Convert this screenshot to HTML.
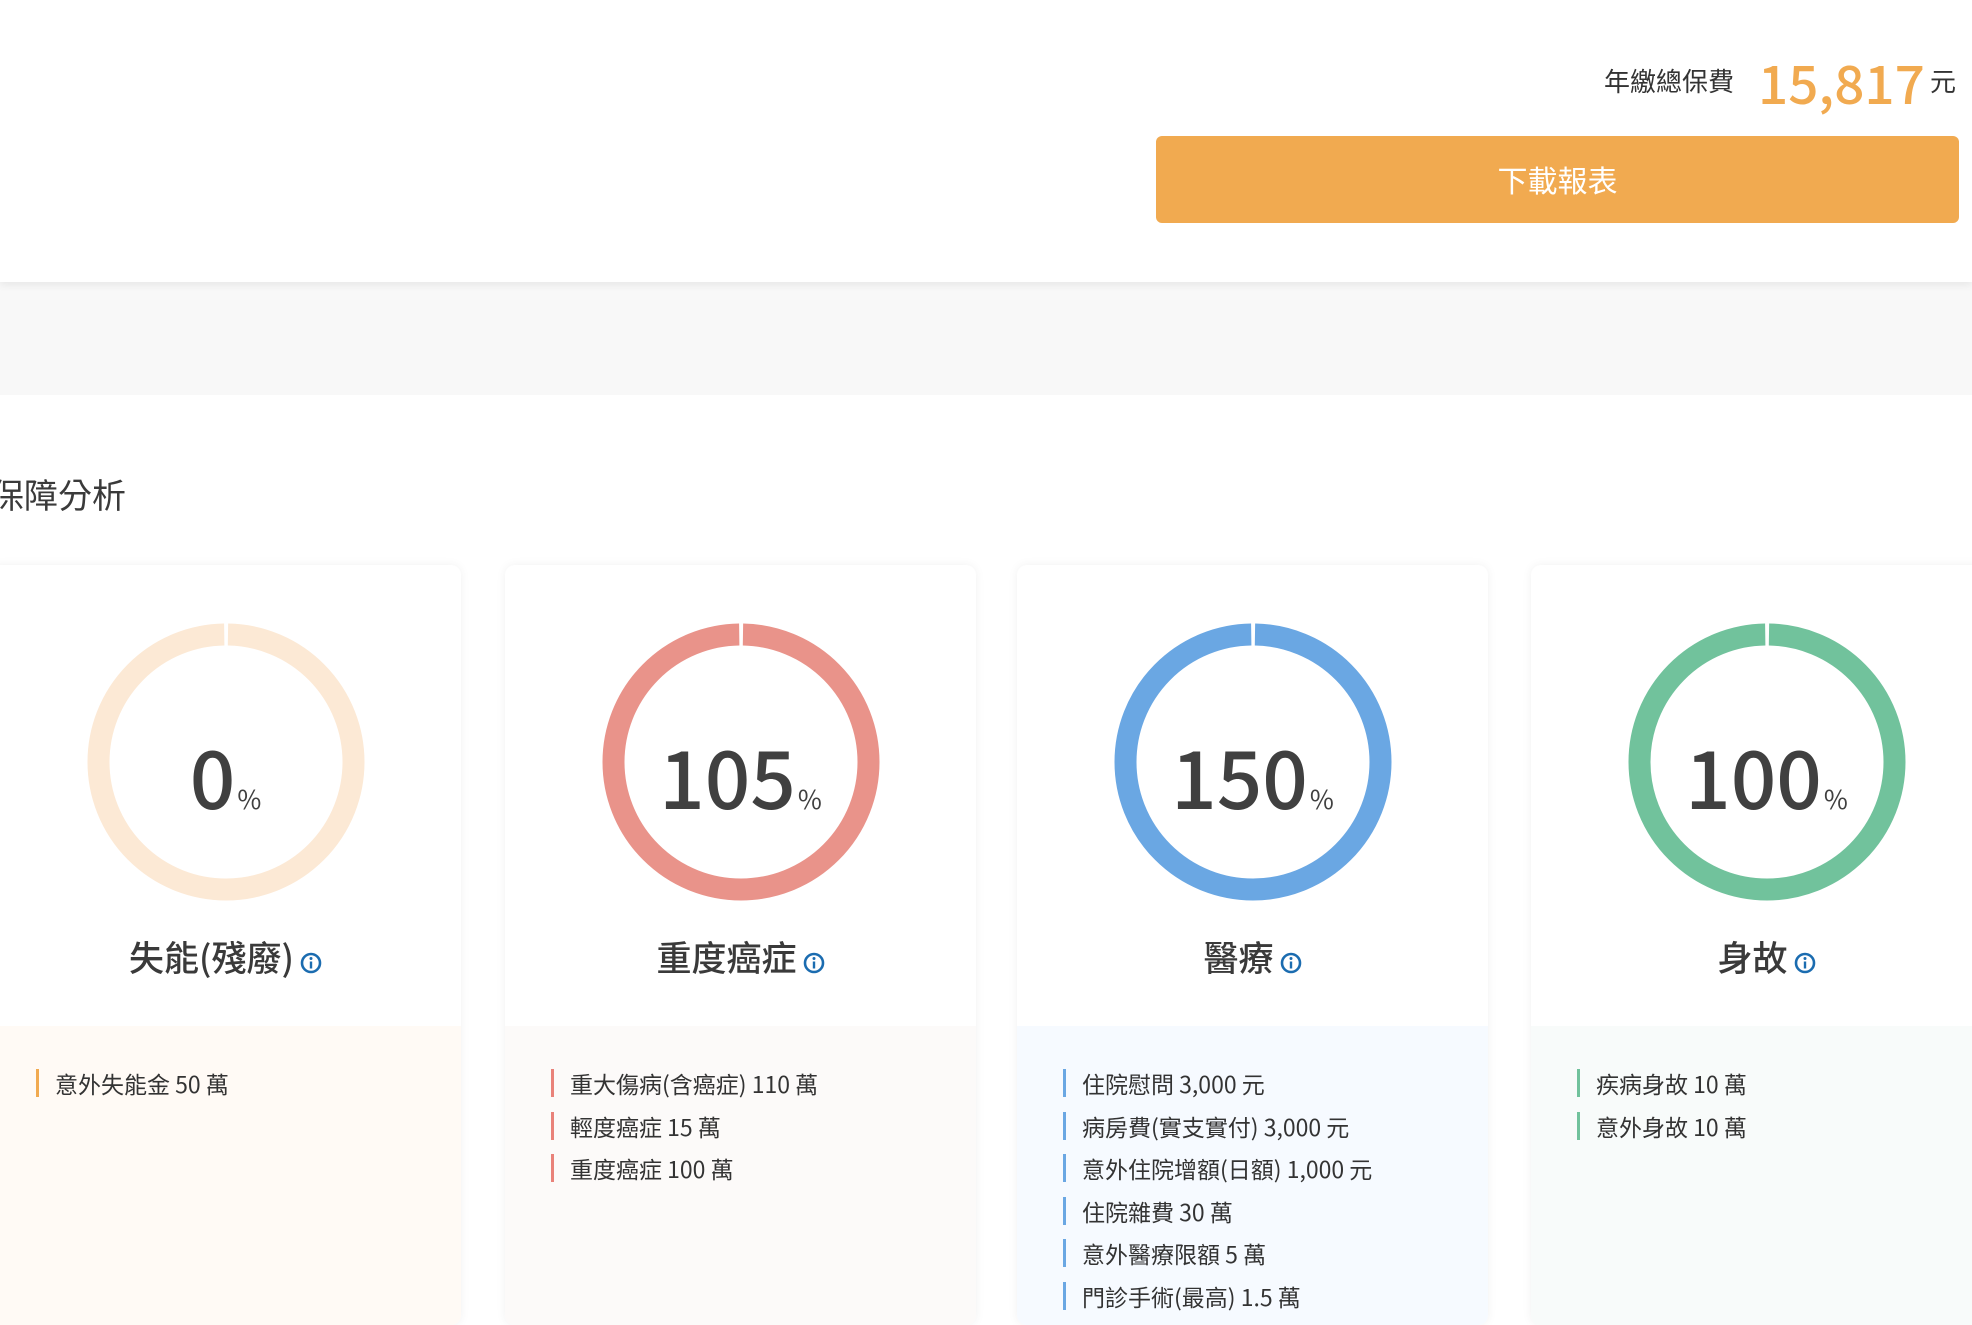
<!DOCTYPE html>
<html><head><meta charset="utf-8">
<style>
*{margin:0;padding:0;box-sizing:border-box}
body{width:1972px;height:1311px;overflow:hidden;background:#fff;font-family:"Liberation Sans","Noto Sans CJK TC",sans-serif;color:#333;position:relative}
.hdr{position:absolute;left:0;top:0;width:1972px;height:282px;background:#fff;box-shadow:0 3px 8px rgba(0,0,0,.07);z-index:2}
.band{position:absolute;left:0;top:282px;width:1972px;height:113px;background:#f8f8f8}
.ab{position:absolute;white-space:nowrap}
.cjk{font-family:"Noto Sans CJK TC",sans-serif}
.btn{position:absolute;left:1156px;top:136px;width:803px;height:87px;background:#f1aa50;border-radius:6px;color:#fff;font-size:30px;text-align:center;line-height:87px;font-family:"Noto Sans CJK TC",sans-serif}
.card{position:absolute;top:565px;width:471px;height:760px;background:#fff;border-radius:10px;box-shadow:0 0 10px rgba(0,0,0,.06);overflow:hidden}
.card .bot{position:absolute;left:0;top:461px;width:100%;height:300px}
.card svg.ring{position:absolute;left:96px;top:57px}
.num{position:absolute;left:0;width:100%;text-align:center;top:170px;font-family:"Noto Sans CJK TC",sans-serif;font-size:80px;font-weight:500;color:#404040;line-height:1}
.num span{font-size:26px;font-weight:400;margin-left:2px}
.ttl{position:absolute;left:0;width:100%;text-align:center;top:368px;font-family:"Noto Sans CJK TC",sans-serif;font-size:35px;font-weight:500;color:#3a3a3a;line-height:48px}
.ttl svg{vertical-align:-3px;margin-left:6px}
ul{position:absolute;left:46px;top:497px;list-style:none}
li{position:relative;padding-left:19px;font-family:"Noto Sans CJK TC",sans-serif;font-size:23px;line-height:42.5px;color:#333;white-space:nowrap}
li:before{content:"";position:absolute;left:0;top:7px;width:3px;height:28px;background:var(--c)}
</style></head><body>
<div class="hdr">
  <div class="ab cjk" style="left:1604px;top:62px;font-size:26px;color:#333;">年繳總保費</div>
  <div class="ab cjk" style="left:1758px;top:46px;font-size:53px;color:#f1aa50;line-height:72px;font-weight:500">15,817</div>
  <div class="ab cjk" style="left:1930px;top:62px;font-size:26px;color:#333;">元</div>
  <div class="btn">下載報表</div>
</div>
<div class="band"></div>
<div class="ab cjk" style="left:-10px;top:470px;font-size:34px;color:#3a3a3a;line-height:48px">保障分析</div>

<div class="card" style="left:-10px">
  <svg class="ring" width="280" height="280" viewBox="0 0 280 280"><circle cx="140" cy="140" r="127.5" fill="none" stroke="#fce9d5" stroke-width="22" stroke-dasharray="797 4" stroke-dashoffset="-2" transform="rotate(-90 140 140)"/></svg>
  <div class="num">0<span>%</span></div>
  <div class="ttl">失能(殘廢)<svg width="22" height="22" viewBox="0 0 22 22"><circle cx="11" cy="11" r="9" fill="none" stroke="#1b6cb0" stroke-width="2.6"/><rect x="9.8" y="9.5" width="2.4" height="7" fill="#1b6cb0"/><circle cx="11" cy="6.5" r="1.5" fill="#1b6cb0"/></svg></div>
  <div class="bot" style="background:#fffaf5"></div>
  <ul style="--c:#f1aa50"><li>意外失能金 50 萬</li></ul>
</div>

<div class="card" style="left:505px">
  <svg class="ring" width="280" height="280" viewBox="0 0 280 280"><circle cx="140" cy="140" r="127.5" fill="none" stroke="#e9938a" stroke-width="22" stroke-dasharray="797 4" stroke-dashoffset="-2" transform="rotate(-90 140 140)"/></svg>
  <div class="num">105<span>%</span></div>
  <div class="ttl">重度癌症<svg width="22" height="22" viewBox="0 0 22 22"><circle cx="11" cy="11" r="9" fill="none" stroke="#1b6cb0" stroke-width="2.6"/><rect x="9.8" y="9.5" width="2.4" height="7" fill="#1b6cb0"/><circle cx="11" cy="6.5" r="1.5" fill="#1b6cb0"/></svg></div>
  <div class="bot" style="background:#fcfaf9"></div>
  <ul style="--c:#e9827a"><li>重大傷病(含癌症) 110 萬</li><li>輕度癌症 15 萬</li><li>重度癌症 100 萬</li></ul>
</div>

<div class="card" style="left:1017px">
  <svg class="ring" width="280" height="280" viewBox="0 0 280 280"><circle cx="140" cy="140" r="127.5" fill="none" stroke="#6aa7e3" stroke-width="22" stroke-dasharray="797 4" stroke-dashoffset="-2" transform="rotate(-90 140 140)"/></svg>
  <div class="num">150<span>%</span></div>
  <div class="ttl">醫療<svg width="22" height="22" viewBox="0 0 22 22"><circle cx="11" cy="11" r="9" fill="none" stroke="#1b6cb0" stroke-width="2.6"/><rect x="9.8" y="9.5" width="2.4" height="7" fill="#1b6cb0"/><circle cx="11" cy="6.5" r="1.5" fill="#1b6cb0"/></svg></div>
  <div class="bot" style="background:#f6faff"></div>
  <ul style="--c:#6aa7e3"><li>住院慰問 3,000 元</li><li>病房費(實支實付) 3,000 元</li><li>意外住院增額(日額) 1,000 元</li><li>住院雜費 30 萬</li><li>意外醫療限額 5 萬</li><li>門診手術(最高) 1.5 萬</li></ul>
</div>

<div class="card" style="left:1531px">
  <svg class="ring" width="280" height="280" viewBox="0 0 280 280"><circle cx="140" cy="140" r="127.5" fill="none" stroke="#71c29c" stroke-width="22" stroke-dasharray="797 4" stroke-dashoffset="-2" transform="rotate(-90 140 140)"/></svg>
  <div class="num">100<span>%</span></div>
  <div class="ttl">身故<svg width="22" height="22" viewBox="0 0 22 22"><circle cx="11" cy="11" r="9" fill="none" stroke="#1b6cb0" stroke-width="2.6"/><rect x="9.8" y="9.5" width="2.4" height="7" fill="#1b6cb0"/><circle cx="11" cy="6.5" r="1.5" fill="#1b6cb0"/></svg></div>
  <div class="bot" style="background:#f8fbfa"></div>
  <ul style="--c:#71c29c"><li>疾病身故 10 萬</li><li>意外身故 10 萬</li></ul>
</div>
</body></html>
